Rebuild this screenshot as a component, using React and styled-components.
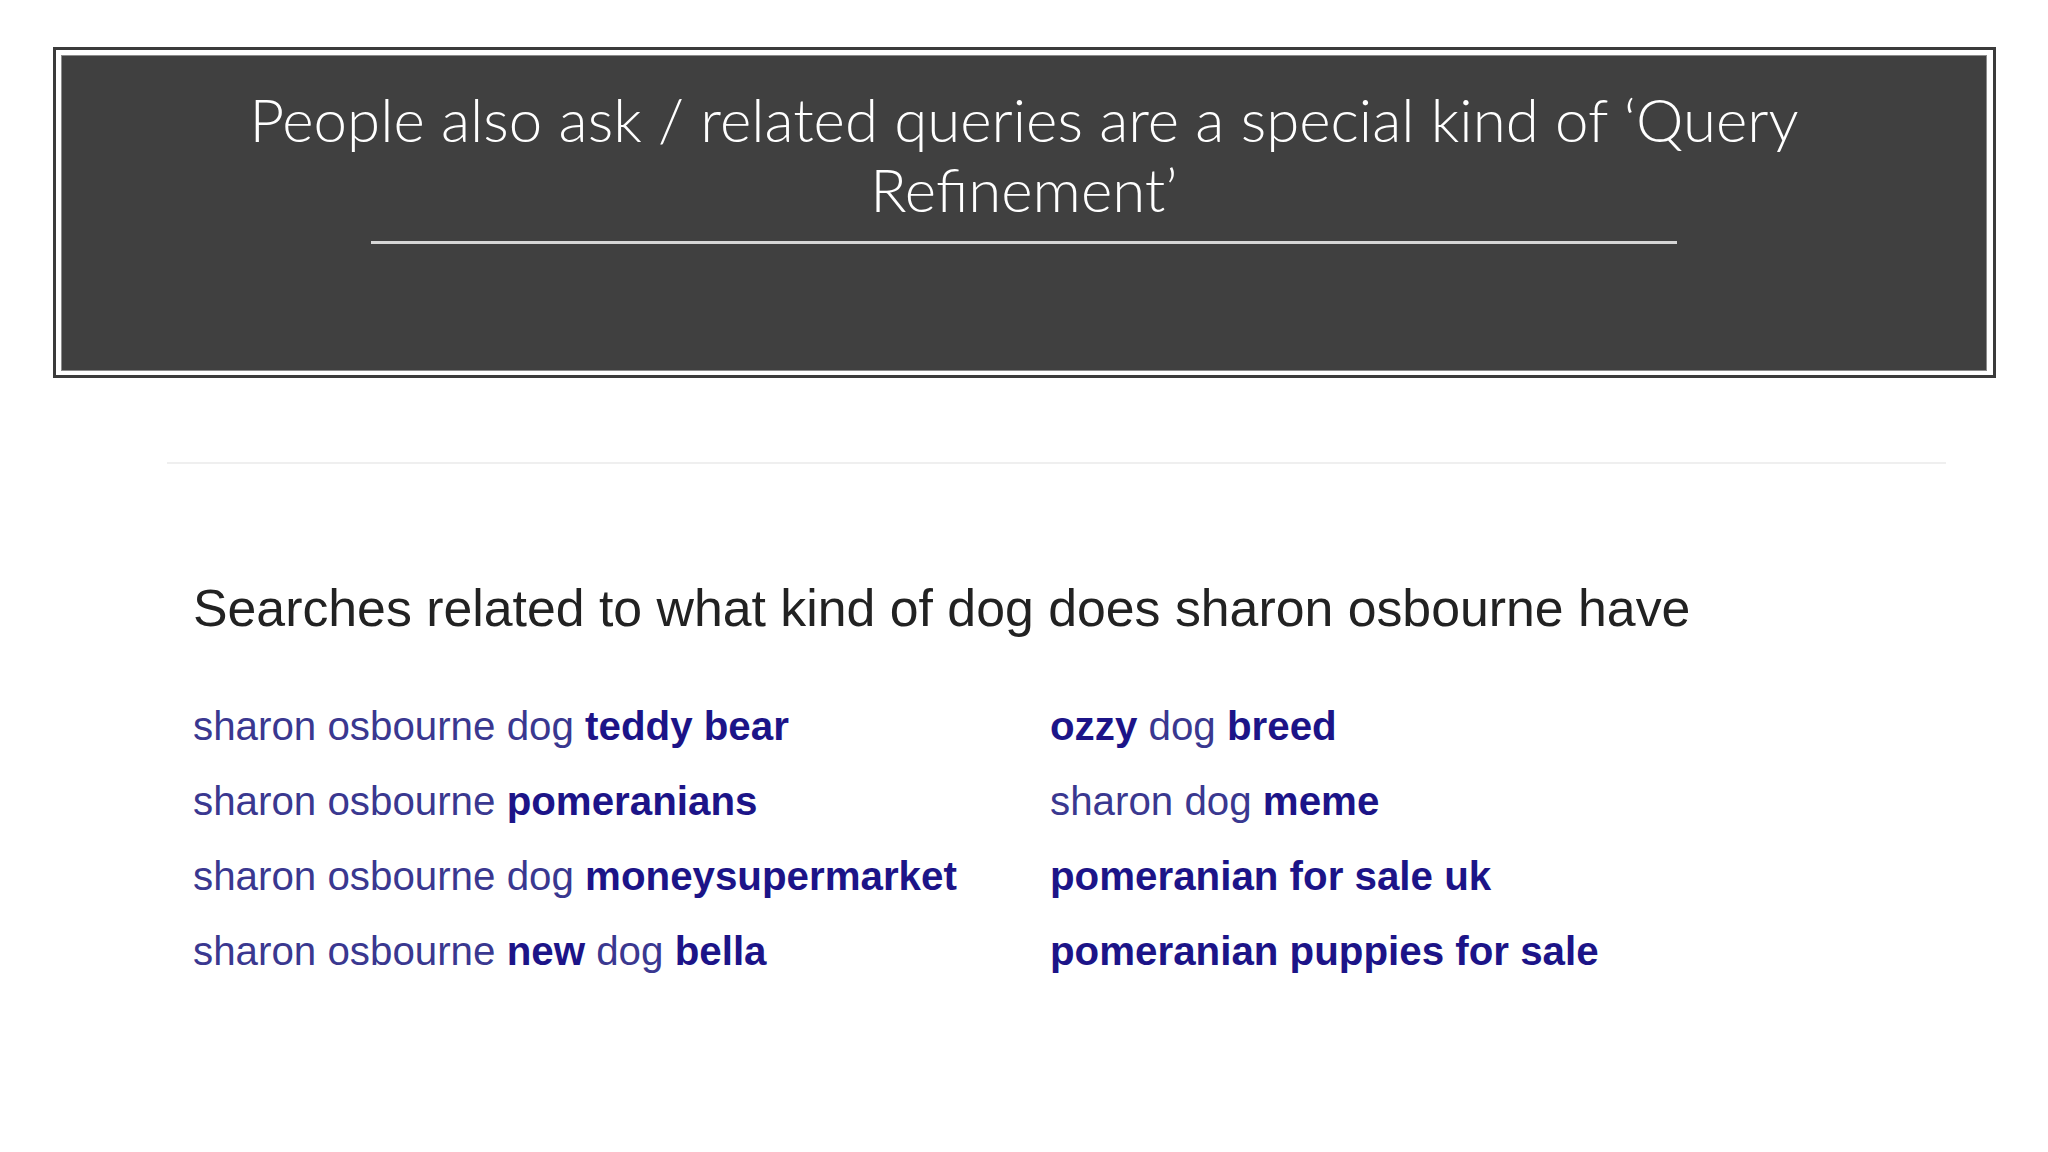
import React from "react";
import styled, { createGlobalStyle } from "styled-components";

const Global = createGlobalStyle`
  html, body { margin: 0; padding: 0; background: #ffffff; }
  #root { width: 2048px; height: 1152px; }
`;

const Slide = styled.div`
  width: 2048px;
  height: 1152px;
  box-sizing: border-box;
  padding-top: 47px;
  display: flex;
  flex-direction: column;
  background: #ffffff;
  overflow: hidden;
`;

const TitleFrame = styled.div`
  margin: 0 52px 0 53px;
  height: 331px;
  box-sizing: border-box;
  border: 3px solid #3b3b3b;
  padding: 5px 6px 4px 5px;
  background: #ffffff;
  display: flex;
`;

const TitlePanel = styled.div`
  flex: 1;
  background: #404040;
  border: 1px solid #8c8c8c;
  display: flex;
  flex-direction: column;
  align-items: center;
  padding-top: 28px;
`;

const Title = styled.h1`
  margin: 0;
  color: #ffffff;
  font-family: "Lato", "Open Sans", sans-serif;
  font-weight: 300;
  font-size: 60px;
  line-height: 70px;
  text-align: center;
  letter-spacing: 0;
`;

const TitleRule = styled.div`
  margin-top: 17px;
  width: 1306px;
  height: 3px;
  background: #d6d6d6;
`;

const Results = styled.section`
  margin: 84px 102px 0 167px;
  display: flex;
  flex-direction: column;
`;

const Divider = styled.div`
  height: 2px;
  background: #efefef;
  box-shadow: 0 8px 10px rgba(0, 0, 0, 0.012);
`;

const Heading = styled.h2`
  margin: 114px 0 0 26px;
  font-family: "Liberation Sans", Arial, sans-serif;
  font-weight: 400;
  font-size: 51.8px;
  line-height: 60px;
  color: #222222;
`;

const LinkGrid = styled.div`
  margin: 51px 0 0 26px;
  display: grid;
  grid-template-columns: 857px 1fr;
  grid-template-rows: repeat(4, 75px);
  grid-auto-flow: column;
`;

const RelatedLink = styled.a`
  font-family: "Liberation Sans", Arial, sans-serif;
  font-size: 40.3px;
  line-height: 75px;
  color: #3a3890;
  text-decoration: none;
  white-space: nowrap;
`;

const Strong = styled.b`
  font-weight: 700;
  color: #1c1488;
`;

const links = [
  [["sharon osbourne dog ", false], ["teddy bear", true]],
  [["sharon osbourne ", false], ["pomeranians", true]],
  [["sharon osbourne dog ", false], ["moneysupermarket", true]],
  [["sharon osbourne ", false], ["new", true], [" dog ", false], ["bella", true]],
  [["ozzy", true], [" dog ", false], ["breed", true]],
  [["sharon dog ", false], ["meme", true]],
  [["pomeranian for sale uk", true]],
  [["pomeranian puppies for sale", true]],
];

export default function App() {
  return (
    <>
      <Global />
      <Slide>
        <TitleFrame>
          <TitlePanel>
            <Title>
              People also ask / related queries are a special kind of ‘Query
              <br />
              Refinement’
            </Title>
            <TitleRule />
          </TitlePanel>
        </TitleFrame>
        <Results>
          <Divider />
          <Heading>Searches related to what kind of dog does sharon osbourne have</Heading>
          <LinkGrid>
            {links.map((segs, i) => (
              <RelatedLink key={i} href="#">
                {segs.map(([t, b], j) =>
                  b ? <Strong key={j}>{t}</Strong> : <React.Fragment key={j}>{t}</React.Fragment>
                )}
              </RelatedLink>
            ))}
          </LinkGrid>
        </Results>
      </Slide>
    </>
  );
}
